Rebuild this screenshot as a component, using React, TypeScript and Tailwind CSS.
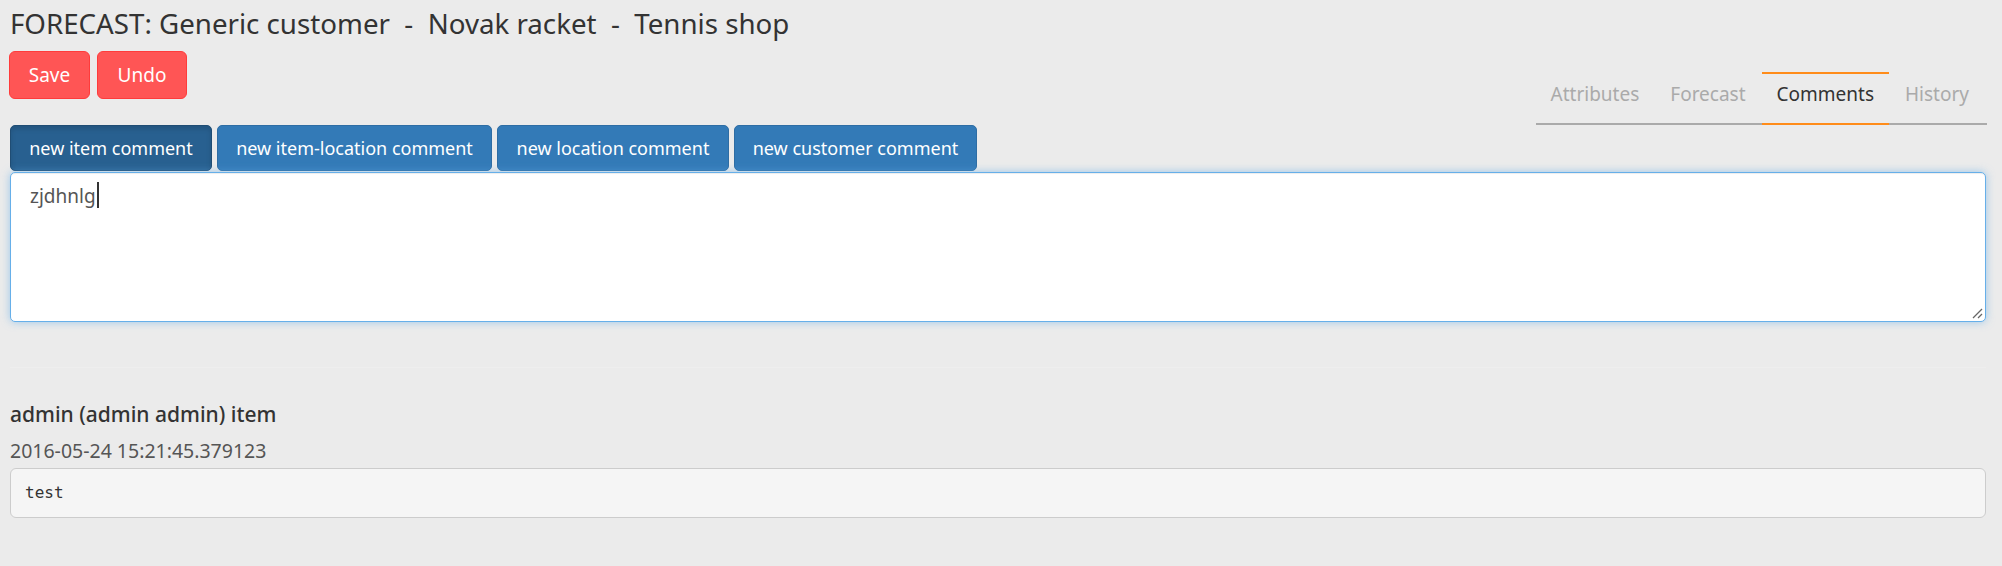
import React from "react";

const font = { fontFamily: '"Noto Sans", "Open Sans", "DejaVu Sans", sans-serif' };

export default function App() {
  const tabs = ["Attributes", "Forecast", "Comments", "History"];
  const commentBtns = [
    { label: "new item comment", w: "w-[202px]", active: true },
    { label: "new item-location comment", w: "w-[275px]", active: false },
    { label: "new location comment", w: "w-[232px]", active: false },
    { label: "new customer comment", w: "w-[243px]", active: false },
  ];
  return (
    <div
      className="min-h-[566px] w-full bg-[#ebebeb] pl-[10px] pr-[16px] text-[#333]"
      style={font}
    >
      <div className="pt-[5px] text-[27.7px] leading-[36px] text-[#333] whitespace-pre">
        {"FORECAST: Generic customer  -  Novak racket  -  Tennis shop"}
      </div>

      <div className="mt-[10px] flex items-start justify-between">
        <div className="-ml-px flex gap-[7px]">
          <button className="flex h-[48px] w-[81px] items-center justify-center rounded-[6px] border border-[#ff3b3b] bg-[#ff5555] text-[19px] text-white">
            Save
          </button>
          <button className="flex h-[48px] w-[90px] items-center justify-center rounded-[6px] border border-[#ff3b3b] bg-[#ff5555] text-[19px] text-white">
            Undo
          </button>
        </div>
        <div className="mt-[21px] -mr-px flex gap-px border-b-2 border-[#aaaaaa] pr-[3px]">
          {tabs.map((t) => {
            const active = t === "Comments";
            return (
              <div
                key={t}
                className={
                  active
                    ? "-mb-[2px] border-t-2 border-b-2 border-[#ff8c1a] px-[15px] pt-[6px] pb-[15px] text-[19px] leading-[28px] text-[#333]"
                    : "-mb-[2px] border-t-2 border-b-2 border-transparent px-[15px] pt-[6px] pb-[15px] text-[19px] leading-[28px] text-[#aaaaaa]"
                }
              >
                {t}
              </div>
            );
          })}
        </div>
      </div>

      <div className="flex gap-[5px]">
        {commentBtns.map((b) => (
          <button
            key={b.label}
            className={
              b.active
                ? `${b.w} flex h-[46px] items-center justify-center rounded-[5px] border border-[#204d74] bg-[#286090] text-[18px] text-white shadow-[inset_0_3px_5px_rgba(0,0,0,0.125)]`
                : `${b.w} flex h-[46px] items-center justify-center rounded-[5px] border border-[#2e6da4] bg-[#337ab7] text-[18px] text-white`
            }
          >
            {b.label}
          </button>
        ))}
      </div>

      <div className="relative mt-px h-[150px] rounded-[5px] border border-[#66afe9] bg-white pt-[4px] pl-[19px] text-[19px] leading-[27px] text-[#555] shadow-[inset_0_1px_1px_rgba(0,0,0,0.075),0_0_8px_rgba(102,175,233,0.6)]">
        <span>zjdhnlg</span>
        <span className="ml-px inline-block h-[26px] w-[2px] translate-y-[5px] bg-[#333]" />
        <svg
          className="absolute right-[2px] bottom-[2px]"
          width="12"
          height="12"
          viewBox="0 0 12 12"
        >
          <line x1="2" y1="11" x2="11" y2="2" stroke="#666" strokeWidth="1.3" />
          <line x1="7" y1="11" x2="11" y2="7" stroke="#666" strokeWidth="1.3" />
        </svg>
      </div>

      <div className="mt-[45px] border-t border-[#eeeeee]" />

      <div className="mt-[32px] text-[21px] font-medium leading-[28px] text-[#333]">
        admin (admin admin) item
      </div>
      <div className="mt-[9px] text-[19.5px] leading-[28px] text-[#555]">
        2016-05-24 15:21:45.379123
      </div>
      <div
        className="mt-[3px] flex h-[50px] items-center rounded-[6px] border border-[#cccccc] bg-[#f5f5f5] pl-[14px] text-[16px] text-[#333]"
        style={{ fontFamily: '"DejaVu Sans Mono", "Liberation Mono", monospace' }}
      >
        test
      </div>
    </div>
  );
}
